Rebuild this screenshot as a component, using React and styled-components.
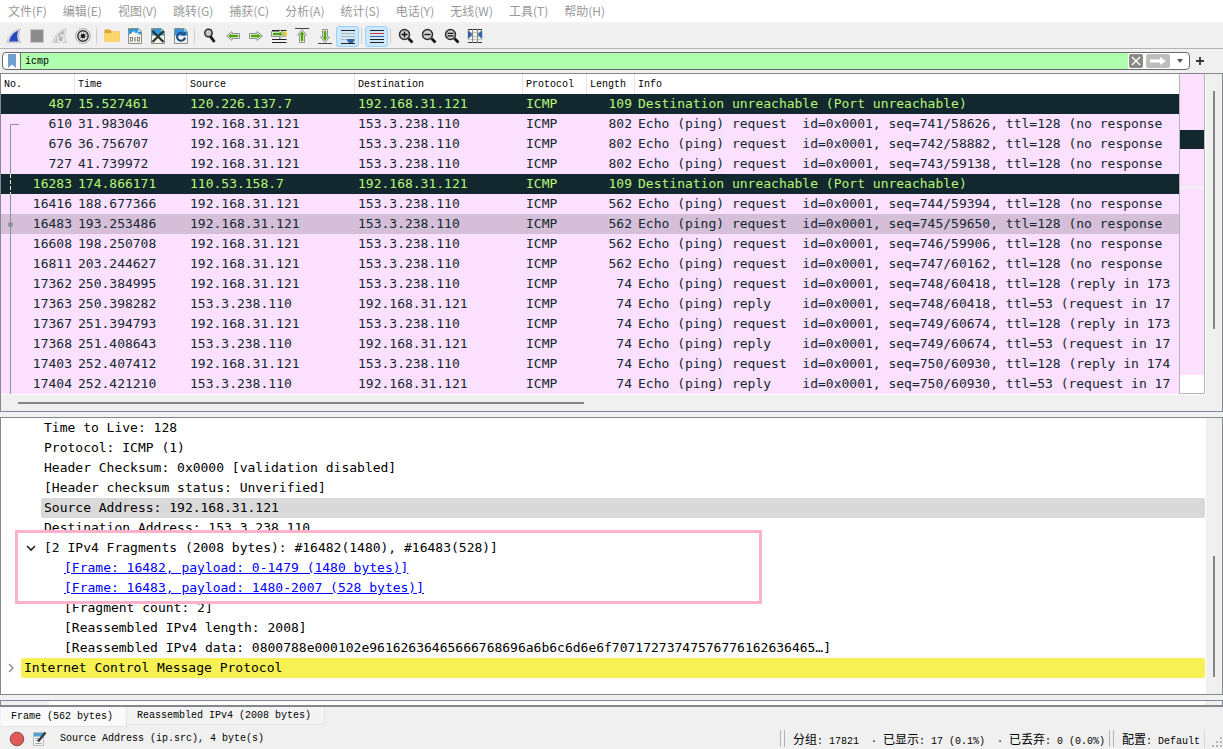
import React, { useState } from 'react';
import styled, { createGlobalStyle, css } from 'styled-components';

const GlobalStyle = createGlobalStyle`
    * {
        box-sizing: border-box;
    }

    body {
        margin: 0;
        background: #f0f0f0;
        color: #000000;
    }

    button {
        border: none;
        background: none;
        padding: 0;
        margin: 0;
        font: inherit;
        color: inherit;
    }
`;

const uiFont = css`
    font-family: 'Liberation Mono', 'Noto Sans CJK SC', monospace;
    font-size: 10px;
`;

const dataFont = css`
    font-family: 'DejaVu Sans Mono', 'Noto Sans CJK SC', monospace;
    font-size: 13px;
    line-height: 20px;
`;

const Window = styled.div`
    display: flex;
    flex-direction: column;
    min-height: 100vh;
    background: #f0f0f0;
    ${uiFont}
`;

const MenuBar = styled.nav`
    display: flex;
    height: 24px;
    background: #ffffff;
    border-bottom: 2px solid #f3f3f3;
    font-family: 'Noto Sans CJK SC', sans-serif;
    font-size: 12px;
    line-height: 22px;
    color: #999999;
`;

const MenuItem = styled.button`
    padding: 0 8px;
    white-space: nowrap;
`;

const ToolBar = styled.div`
    display: flex;
    align-items: center;
    height: 25px;
    padding: 0 2px;
    border-bottom: 1px solid #b4b4b4;
`;

const ToolButton = styled.button`
    display: flex;
    align-items: center;
    justify-content: center;
    width: 23px;
    height: 21px;
    border-radius: 3px;
    border: 1px solid ${({ $active }) => ($active ? '#99d1ff' : 'transparent')};
    background: ${({ $active }) => ($active ? '#cce8ff' : 'transparent')};

    svg {
        flex: none;
    }
`;

const ToolSeparator = styled.div`
    width: 1px;
    height: 16px;
    margin: 0 3px 0 2px;
    background: #cfcfcf;
`;

const FilterBar = styled.form`
    display: flex;
    align-items: center;
    height: 24px;
    padding: 0 2px;
`;

const FilterBox = styled.div`
    flex: 1;
    display: flex;
    align-items: center;
    height: 18px;
    border: 1px solid #6a6a6a;
    border-radius: 4px;
    background: #ffffff;
    overflow: hidden;
`;

const BookmarkButton = styled.button`
    display: flex;
    align-items: center;
    justify-content: center;
    width: 18px;
    height: 16px;
    border-right: 1px solid #6a6a6a;
`;

const FilterInput = styled.input`
    flex: 1;
    min-width: 0;
    height: 16px;
    border: none;
    outline: none;
    padding: 0 4px;
    background: #afffaf;
    ${uiFont}
`;

const FilterAction = styled.button`
    display: flex;
    align-items: center;
    justify-content: center;
    width: ${({ $wide }) => ($wide ? '24px' : '14px')};
    height: 14px;
    margin: 0 2px 0 1px;
    border-radius: 2px;
    background: ${({ $tone }) => $tone};
`;

const AddButton = styled.button`
    width: 31px;
    padding-right: 11px;
    display: flex;
    justify-content: center;
`;

const Panel = styled.section`
    display: flex;
    border: 1px solid #828790;
    background: #ffffff;
    overflow: hidden;
`;

const PacketArea = styled(Panel)`
    flex-direction: column;
    margin-bottom: 5px;
`;

const PacketBody = styled.div`
    display: flex;
    height: 321px;
    background: #ffffff;
`;

const TableClip = styled.div`
    flex: 1;
    min-width: 0;
    overflow: hidden;
`;

const PacketTable = styled.table`
    width: 100%;
    table-layout: fixed;
    border-collapse: separate;
    border-spacing: 0;
`;

const HeadCell = styled.th`
    height: 20px;
    padding: 0 0 0 3px;
    text-align: left;
    font-weight: 400;
    white-space: nowrap;
    border-right: ${({ $last }) => ($last ? 'none' : '1px solid #e5e5e5')};
`;

const rowColors = {
    error: css`
        background: #12272e;
        color: #b7f774;
    `,
    ping: css`
        background: #fce0ff;
        color: #12272e;
    `,
    selected: css`
        background: #d5bfd8;
        color: #12272e;
    `,
};

const PacketRow = styled.tr`
    ${({ $kind }) => rowColors[$kind]}
`;

const Cell = styled.td`
    height: 20px;
    padding: 0 3px;
    overflow: hidden;
    white-space: pre;
    text-align: ${({ $right }) => ($right ? 'right' : 'left')};
    ${dataFont}
`;

const NumberCell = styled(Cell)`
    padding-left: 0;
`;

const NumberContent = styled.div`
    display: flex;
    justify-content: space-between;
    height: 20px;
`;

const MiniMap = styled.div`
    display: flex;
    flex-direction: column;
    width: 26px;
    height: 320px;
    border: 1px solid #b4b4b4;
    border-top: none;
`;

const MapBand = styled.div`
    height: ${({ $height }) => $height}px;
    background: ${({ $color }) => $color};
`;

const VerticalTrack = styled.div`
    width: 16px;
    padding: ${({ $top }) => $top}px 0 0 7px;
    margin-left: 1px;
    background: #f0f0f0;
`;

const VerticalThumb = styled.div`
    width: 2px;
    height: ${({ $length }) => $length}px;
    background: #858585;
`;

const HorizontalTrack = styled.div`
    height: 16px;
    padding: 7px 0 0 17px;
    background: #f0f0f0;
`;

const HorizontalThumb = styled.div`
    width: 566px;
    height: 2px;
    background: #858585;
`;

const DetailArea = styled(Panel)`
    height: 278px;
    margin-bottom: 5px;
`;

const DetailTree = styled.div`
    flex: 1;
    min-width: 0;
    overflow: hidden;
    ${dataFont}
`;

const DetailLine = styled.div`
    display: flex;
    height: 20px;
    padding-left: ${({ $indent }) => $indent}px;
    white-space: pre;
`;

const DetailText = styled.div`
    flex: 1;
    padding-left: 3px;
    border-radius: 2px;
    background: ${({ $bg }) => $bg || 'transparent'};
`;

const FrameLink = styled.a`
    color: #0000ff;
    text-decoration: underline;
`;

const Expander = styled.button`
    display: flex;
    align-items: center;
    justify-content: center;
    width: 20px;
    height: 20px;
`;

const FragmentBox = styled.div`
    position: relative;
    width: 747px;
    max-width: 100%;
    margin: -8px 0 -6px 14px;
    padding: 5px 0 3px;
    border: 3px solid #ffb0ca;
    background: #ffffff;
`;

const BytesArea = styled(Panel)`
    height: 7px;
    border-bottom-width: 2px;
`;

const BytesGutter = styled.div`
    width: ${({ $width }) => $width}px;
    background: #f0f0f0;
`;

const BytesBody = styled.div`
    flex: 1;
`;

const TabBar = styled.div`
    display: flex;
    align-items: flex-start;
    height: 20px;
    padding-left: 1px;
`;

const Tab = styled.button`
    height: ${({ $active }) => ($active ? '20px' : '18px')};
    padding: 0 13px 0 10px;
    white-space: nowrap;
    background: ${({ $active }) => ($active ? '#fafafa' : '#f3f3f3')};
    border-right: 1px solid #e3e3e3;
    border-bottom: 1px solid #e3e3e3;
`;

const StatusBar = styled.footer`
    display: flex;
    align-items: center;
    height: 23px;
    padding-left: 8px;
    white-space: pre;
`;

const StatusButton = styled.button`
    display: flex;
    align-items: center;
    justify-content: center;
    width: 18px;
    height: 18px;
    margin-right: 4px;
`;

const StatusText = styled.span`
    flex: ${({ $grow }) => ($grow ? 1 : 'none')};
    padding: 0 4px 0 8px;
`;

const StatusGrip = styled.div`
    width: 5px;
    height: 17px;
    border: solid #b4b4b4;
    border-width: 0 1px;
`;

const Cjk = styled.span`
    font-family: 'Noto Sans CJK SC', sans-serif;
    font-size: 12px;
    line-height: 16px;
`;

const SizeGrip = styled.div`
    display: flex;
    align-items: flex-end;
    justify-content: flex-end;
    width: 19px;
    height: 18px;
    border-left: 1px solid #d9d9d9;
`;

/* ---------- icons ---------- */

const Icon = ({ children }) => (
    <svg width="16" height="16" viewBox="0 0 16 16" fill="none">
        {children}
    </svg>
);

const Fin = ({ fill, edge }) => (
    <path d="M1 14.5C2 8 7 2 14.5 1C12 5 12.3 10 14.8 14.5Z" fill={fill} stroke={edge} />
);

const StartIcon = () => (
    <Icon>
        <Fin fill="#e4e4e4" edge="#c4c4c4" />
        <path d="M3 13.5C4 8.5 7.5 4 12.5 2.5C10.8 6 11 10 12.5 13.5Z" fill="#2a48c0" />
    </Icon>
);

const StopIcon = () => (
    <Icon>
        <rect x="1.5" y="1.5" width="13" height="13" fill="#8c8c8c" stroke="#c8c8c8" />
    </Icon>
);

const RestartIcon = () => (
    <Icon>
        <Fin fill="#e9e9e9" edge="#cccccc" />
        <path d="M3 13.5C4 8.5 7.5 4 12.5 2.5C10.8 6 11 10 12.5 13.5Z" fill="#b4b4b4" />
        <path d="M7 8.5A3 3 0 1 0 11 9" stroke="#f2f2f2" strokeWidth="1.5" />
        <path d="M8.5 5.5V9.5L11.5 7.5Z" fill="#f2f2f2" />
    </Icon>
);

const OptionsIcon = () => (
    <Icon>
        <circle cx="8" cy="8" r="7.4" fill="#f4f4f4" stroke="#9a9a9a" strokeWidth="0.8" />
        <circle cx="8" cy="8" r="5.2" stroke="#2a2a2a" strokeWidth="1.4" />
        <circle cx="8" cy="8" r="3.2" stroke="#2a2a2a" strokeWidth="1" strokeDasharray="1.1 1.41" />
        <circle cx="8" cy="8" r="2.3" fill="#1c1c1c" />
    </Icon>
);

const FolderIcon = () => (
    <Icon>
        <path d="M0.5 1.5H6L7.5 3.5H15.5V13.5H0.5Z" fill="#e2a42c" />
        <path d="M0.5 5H7L8.5 3.5H15.5V14H0.5Z" fill="#ffd46c" />
    </Icon>
);

const Sheet = ({ children }) => (
    <Icon>
        <path d="M1.5 0.5H11.5L14.5 3.5V15.5H1.5Z" fill="#f4f4e6" stroke="#8b8f86" />
        <path d="M2 1H11.5L14 3.5V7.5H2Z" fill="#2f97dc" />
        <path d="M11 1L14 4H11Z" fill="#d9eefa" />
        {children}
    </Icon>
);

const SaveIcon = () => (
    <Sheet>
        <path d="M2 8.5V6.500C4.5 6.500 5 3.500 7.500 3C6.800 5 9 5.500 11 4.500C11 6 12 6.500 14 6.500V8.5Z" fill="#f4f4e6" />
        <rect x="3.5" y="9.5" width="2" height="3.5" stroke="#6a6a6a" strokeWidth="0.8" />
        <path d="M8 9V13.5" stroke="#6a6a6a" />
        <rect x="10.5" y="9.5" width="2" height="3.5" stroke="#6a6a6a" strokeWidth="0.8" />
    </Sheet>
);

const CloseFileIcon = () => (
    <Sheet>
        <path d="M2.5 3L13.5 14M13.5 3L2.5 14" stroke="#2b3033" strokeWidth="2.2" />
    </Sheet>
);

const ReloadIcon = () => (
    <Sheet>
        <path d="M9.5 5A4 4 0 1 0 12 9.5" stroke="#1f4c87" strokeWidth="2.2" />
        <path d="M7.5 7.5L12.5 7.5V2.5Z" fill="#1f4c87" />
    </Sheet>
);

const FindIcon = () => (
    <Icon>
        <circle cx="6.5" cy="5" r="3.7" fill="#c9c9c9" stroke="#2b2b2b" strokeWidth="1.5" />
        <path d="M8.5 8.5L12.5 14" stroke="#151515" strokeWidth="2.8" />
    </Icon>
);

const Arrow = () => (
    <>
        <path d="M1.5 8L7 3.5V5.5H14.5V10.5H7V12.5Z" fill="#ffffff" stroke="#8f8f8f" />
        <path d="M3.5 8L6 6V7H13V9H6V10Z" fill="#4ea40a" stroke="#4ea40a" strokeWidth="0.6" />
    </>
);

const BackIcon = () => (
    <Icon>
        <Arrow />
    </Icon>
);

const ForwardIcon = () => (
    <Icon>
        <g transform="rotate(180 8 8)">
            <Arrow />
        </g>
    </Icon>
);

const GoToIcon = () => (
    <Icon>
        <path d="M1 2.5H15.5M1 11.5H15.5M1 14.5H15.5" stroke="#222222" />
        <path d="M11 3.5H16V8.5H11Z" fill="#f6d83a" />
        <path d="M1 8.5H15.5" stroke="#b4b6b0" />
        <path d="M13.5 6L8.5 1.5V3.5H0.5V8.5H8.5V10.5Z" fill="#ffffff" stroke="#8f8f8f" />
        <path d="M11.5 6L9 4V5H2V7H9V8Z" fill="#4ea40a" stroke="#4ea40a" strokeWidth="0.6" />
    </Icon>
);

const FirstIcon = () => (
    <Icon>
        <path d="M1 0.5H15" stroke="#444444" />
        <path d="M8 1.5L12.5 7H10.5V14.5H5.5V7H3.5Z" fill="#ffffff" stroke="#8f8f8f" />
        <path d="M8 3.5L10.2 6.2H9V13H7V6.2H5.8Z" fill="#4ea40a" stroke="#4ea40a" strokeWidth="0.6" />
    </Icon>
);

const LastIcon = () => (
    <Icon>
        <path d="M1 15.5H15" stroke="#444444" />
        <path d="M8 14.5L12.5 9H10.5V1.5H5.5V9H3.5Z" fill="#ffffff" stroke="#8f8f8f" />
        <path d="M8 12.5L10.2 9.8H9V3H7V9.8H5.8Z" fill="#4ea40a" stroke="#4ea40a" strokeWidth="0.6" />
    </Icon>
);

const AutoScrollIcon = () => (
    <Icon>
        <path d="M1 2.5H15" stroke="#222222" />
        <path d="M1 5.5H15M1 8.5H15M1 11.5H8" stroke="#b4b6b0" />
        <path d="M1 15.5H15" stroke="#222222" />
        <path d="M7 11H14.5V12.5L12.5 15H9L7 12.5Z" fill="#3465a4" />
    </Icon>
);

const ColorizeIcon = () => (
    <Icon>
        <path d="M1 2.5H15" stroke="#222222" />
        <path d="M1 5.5H15" stroke="#d8322f" />
        <path d="M1 8.5H15" stroke="#3465a4" />
        <path d="M1 11.5H15M1 14.5H15" stroke="#222222" />
    </Icon>
);

const ZoomIcon = ({ sign }) => (
    <Icon>
        <circle cx="6.5" cy="6.5" r="5" fill="#cfcfcf" stroke="#2b2b2b" strokeWidth="1.4" />
        <path d="M10.5 10.5L14.5 14.5" stroke="#111111" strokeWidth="2.6" />
        <path d={sign} stroke="#111111" strokeWidth="1.3" />
    </Icon>
);

const ResizeIcon = () => (
    <Icon>
        <path d="M1 4.5H15M1 8.5H15M1 11.5H15" stroke="#c4c4bd" />
        <path d="M1 1.5H15M1 14.5H15" stroke="#333333" />
        <path d="M5.5 1V15M10.5 1V15" stroke="#85857f" />
        <path d="M1.5 3.5L4.5 6.5L1.5 9.5ZM14.5 3.5L11.5 6.5L14.5 9.5Z" fill="#3465a4" stroke="#3465a4" strokeWidth="1.4" />
    </Icon>
);

const toolGroups = [
    [
        ['开始', <StartIcon />],
        ['停止', <StopIcon />],
        ['重新开始', <RestartIcon />],
        ['选项', <OptionsIcon />],
    ],
    [
        ['打开', <FolderIcon />],
        ['保存', <SaveIcon />],
        ['关闭', <CloseFileIcon />],
        ['重新加载', <ReloadIcon />],
    ],
    [
        ['查找', <FindIcon />],
        ['上一分组', <BackIcon />],
        ['下一分组', <ForwardIcon />],
        ['转到分组', <GoToIcon />],
        ['首个分组', <FirstIcon />],
        ['最新分组', <LastIcon />],
        ['自动滚动', <AutoScrollIcon />, true],
    ],
    [['着色', <ColorizeIcon />, true]],
    [
        ['放大', <ZoomIcon sign="M3.5 6.5H9.5M6.5 3.5V9.5" />],
        ['缩小', <ZoomIcon sign="M3.5 6.5H9.5" />],
        ['正常大小', <ZoomIcon sign="M3.5 5.3H9.5M3.5 7.8H9.5" />],
        ['调整列宽', <ResizeIcon />],
    ],
];

const menus = [
    '文件(F)', '编辑(E)', '视图(V)', '跳转(G)', '捕获(C)', '分析(A)',
    '统计(S)', '电话(Y)', '无线(W)', '工具(T)', '帮助(H)',
];

const columns = [
    ['No.', 74],
    ['Time', 112],
    ['Source', 168],
    ['Destination', 168],
    ['Protocol', 64],
    ['Length', 48],
    ['Info', null],
];

const HOST = '192.168.31.121';
const PEER = '153.3.238.110';
const UNREACHABLE = 'Destination unreachable (Port unreachable)';

const request = (seq, tail) => `Echo (ping) request  id=0x0001, seq=${seq}, ttl=128 (${tail}`;
const reply = (seq, tail) => `Echo (ping) reply    id=0x0001, seq=${seq}, ttl=53 (${tail}`;

const packets = [
    [487, '15.527461', '120.226.137.7', HOST, 109, UNREACHABLE, 'error', null],
    [610, '31.983046', HOST, PEER, 802, request('741/58626', 'no response'), 'ping', 'start'],
    [676, '36.756707', HOST, PEER, 802, request('742/58882', 'no response'), 'ping', 'line'],
    [727, '41.739972', HOST, PEER, 802, request('743/59138', 'no response'), 'ping', 'line'],
    [16283, '174.866171', '110.53.158.7', HOST, 109, UNREACHABLE, 'error', 'dash'],
    [16416, '188.677366', HOST, PEER, 562, request('744/59394', 'no response'), 'ping', 'line'],
    [16483, '193.253486', HOST, PEER, 562, request('745/59650', 'no response'), 'selected', 'dot'],
    [16608, '198.250708', HOST, PEER, 562, request('746/59906', 'no response'), 'ping', 'line'],
    [16811, '203.244627', HOST, PEER, 562, request('747/60162', 'no response'), 'ping', 'line'],
    [17362, '250.384995', HOST, PEER, 74, request('748/60418', 'reply in 173'), 'ping', 'line'],
    [17363, '250.398282', PEER, HOST, 74, reply('748/60418', 'request in 17'), 'ping', 'line'],
    [17367, '251.394793', HOST, PEER, 74, request('749/60674', 'reply in 173'), 'ping', 'line'],
    [17368, '251.408643', PEER, HOST, 74, reply('749/60674', 'request in 17'), 'ping', 'line'],
    [17403, '252.407412', HOST, PEER, 74, request('750/60930', 'reply in 174'), 'ping', 'line'],
    [17404, '252.421210', PEER, HOST, 74, reply('750/60930', 'request in 17'), 'ping', 'line'],
];

const RelatedMark = ({ mark }) => (
    <svg width="20" height="20" viewBox="0 0 20 20" fill="none">
        {mark === 'start' && <path d="M18 10.5H9.5V20" stroke="#87939a" />}
        {(mark === 'line' || mark === 'dot') && <path d="M9.5 0V20" stroke="#87939a" />}
        {mark === 'dash' && <path d="M9.5 0V20" stroke="#d9f7b8" strokeDasharray="4 2" />}
        {mark === 'dot' && <circle cx="9.5" cy="10.5" r="2.5" fill="#87939a" />}
    </svg>
);

const PacketList = () => (
    <PacketTable>
        <colgroup>
            {columns.map(([name, width]) => (
                <col key={name} width={width || undefined} />
            ))}
        </colgroup>
        <thead>
            <tr>
                {columns.map(([name], i) => (
                    <HeadCell key={name} $last={i === columns.length - 1}>{name}</HeadCell>
                ))}
            </tr>
        </thead>
        <tbody>
            {packets.map(([no, time, source, destination, length, info, kind, mark]) => (
                <PacketRow key={no} $kind={kind}>
                    <NumberCell>
                        <NumberContent>
                            <RelatedMark mark={mark} />
                            <span>{no}</span>
                        </NumberContent>
                    </NumberCell>
                    <Cell>{time}</Cell>
                    <Cell>{source}</Cell>
                    <Cell>{destination}</Cell>
                    <Cell>ICMP</Cell>
                    <Cell $right>{length}</Cell>
                    <Cell>{info}</Cell>
                </PacketRow>
            ))}
        </tbody>
    </PacketTable>
);

const Details = () => (
    <DetailTree>
        <DetailLine $indent={40}><DetailText>Time to Live: 128</DetailText></DetailLine>
        <DetailLine $indent={40}><DetailText>Protocol: ICMP (1)</DetailText></DetailLine>
        <DetailLine $indent={40}><DetailText>Header Checksum: 0x0000 [validation disabled]</DetailText></DetailLine>
        <DetailLine $indent={40}><DetailText>[Header checksum status: Unverified]</DetailText></DetailLine>
        <DetailLine $indent={40}><DetailText $bg="#d9d9d9">Source Address: 192.168.31.121</DetailText></DetailLine>
        <DetailLine $indent={40}><DetailText>Destination Address: 153.3.238.110</DetailText></DetailLine>
        <FragmentBox>
            <DetailLine $indent={3}>
                <Expander aria-label="Collapse">
                    <svg width="10" height="10" viewBox="0 0 10 10" fill="none">
                        <path d="M1 3L5 7L9 3" stroke="#222222" strokeWidth="1.6" />
                    </svg>
                </Expander>
                <DetailText>[2 IPv4 Fragments (2008 bytes): #16482(1480), #16483(528)]</DetailText>
            </DetailLine>
            <DetailLine $indent={43}>
                <DetailText><FrameLink href="#16482">[Frame: 16482, payload: 0-1479 (1480 bytes)]</FrameLink></DetailText>
            </DetailLine>
            <DetailLine $indent={43}>
                <DetailText><FrameLink href="#16483">[Frame: 16483, payload: 1480-2007 (528 bytes)]</FrameLink></DetailText>
            </DetailLine>
        </FragmentBox>
        <DetailLine $indent={60}><DetailText>[Fragment count: 2]</DetailText></DetailLine>
        <DetailLine $indent={60}><DetailText>[Reassembled IPv4 length: 2008]</DetailText></DetailLine>
        <DetailLine $indent={60}>
            <DetailText>[Reassembled IPv4 data: 0800788e000102e96162636465666768696a6b6c6d6e6f70717273747576776162636465…]</DetailText>
        </DetailLine>
        <DetailLine $indent={0}>
            <Expander aria-label="Expand">
                <svg width="10" height="10" viewBox="0 0 10 10" fill="none">
                    <path d="M3 1L7 5L3 9" stroke="#8c8c8c" strokeWidth="1.4" />
                </svg>
            </Expander>
            <DetailText $bg="#f7f154">Internet Control Message Protocol</DetailText>
        </DetailLine>
    </DetailTree>
);

const App = () => {
    const [filter, setFilter] = useState('icmp');

    return (
        <Window>
            <GlobalStyle />
            <MenuBar>
                {menus.map((name) => (
                    <MenuItem key={name}>{name}</MenuItem>
                ))}
            </MenuBar>
            <ToolBar>
                {toolGroups.map((group, i) => (
                    <React.Fragment key={i}>
                        {i > 0 && <ToolSeparator />}
                        {group.map(([label, icon, active]) => (
                            <ToolButton key={label} aria-label={label} $active={active}>{icon}</ToolButton>
                        ))}
                    </React.Fragment>
                ))}
            </ToolBar>
            <FilterBar onSubmit={(e) => e.preventDefault()}>
                <FilterBox>
                    <BookmarkButton type="button" aria-label="Bookmarks">
                        <svg width="10" height="14" viewBox="0 0 10 14">
                            <path d="M1 0H9V14L5 10.5L1 14Z" fill="#729fcf" />
                        </svg>
                    </BookmarkButton>
                    <FilterInput
                        aria-label="Display filter"
                        value={filter}
                        onChange={(e) => setFilter(e.target.value)}
                    />
                    <FilterAction type="button" aria-label="Clear" $tone="#888a85" onClick={() => setFilter('')}>
                        <svg width="10" height="10" viewBox="0 0 10 10">
                            <path d="M1 1L9 9M9 1L1 9" stroke="#ffffff" strokeWidth="1.4" />
                        </svg>
                    </FilterAction>
                    <FilterAction type="submit" aria-label="Apply" $wide $tone="#bdbdbd">
                        <svg width="18" height="10" viewBox="0 0 18 10">
                            <path d="M1 3.5H11V1L17 5L11 9V6.5H1Z" fill="#ffffff" />
                        </svg>
                    </FilterAction>
                    <FilterAction type="button" aria-label="Recent filters" $tone="transparent">
                        <svg width="8" height="6" viewBox="0 0 8 6">
                            <path d="M1 1H7L4 5Z" fill="#555555" />
                        </svg>
                    </FilterAction>
                </FilterBox>
                <AddButton type="button" aria-label="Add filter button">
                    <svg width="10" height="10" viewBox="0 0 10 10">
                        <path d="M1 5H9M5 1V9" stroke="#333333" strokeWidth="1.8" />
                    </svg>
                </AddButton>
            </FilterBar>
            <PacketArea>
                <PacketBody>
                    <TableClip>
                        <PacketList />
                    </TableClip>
                    <MiniMap>
                        <MapBand $height={56} $color="#fce0ff" />
                        <MapBand $height={19} $color="#12272e" />
                        <MapBand $height={37} $color="#fce0ff" />
                        <MapBand $height={2} $color="#f0f0f0" />
                        <MapBand $height={187} $color="#fce0ff" />
                    </MiniMap>
                    <VerticalTrack $top={17}>
                        <VerticalThumb $length={238} />
                    </VerticalTrack>
                </PacketBody>
                <HorizontalTrack>
                    <HorizontalThumb />
                </HorizontalTrack>
            </PacketArea>
            <DetailArea>
                <Details />
                <VerticalTrack $top={138}>
                    <VerticalThumb $length={121} />
                </VerticalTrack>
            </DetailArea>
            <BytesArea>
                <BytesGutter $width={48} />
                <BytesBody />
                <BytesGutter $width={17} />
            </BytesArea>
            <TabBar>
                <Tab $active>Frame (562 bytes)</Tab>
                <Tab>Reassembled IPv4 (2008 bytes)</Tab>
            </TabBar>
            <StatusBar>
                <StatusButton aria-label="Expert information">
                    <svg width="16" height="16" viewBox="0 0 16 16">
                        <circle cx="8" cy="8" r="6.8" fill="#e05a5a" stroke="#8c4a4a" />
                    </svg>
                </StatusButton>
                <StatusButton aria-label="Capture comments">
                    <svg width="16" height="16" viewBox="0 0 16 16" fill="none">
                        <path d="M2.5 1.5H12.5V14.5H2.5Z" fill="#f4f6f6" stroke="#b8bcbc" />
                        <path d="M3 2H12V5.5H3Z" fill="#4aa3dc" />
                        <path d="M4.5 7.5H8M4.5 9.5H7M4.5 12.5H10.5" stroke="#a0a4a4" />
                        <path d="M7 10.5L14.5 1.5" stroke="#33393b" strokeWidth="2.4" />
                    </svg>
                </StatusButton>
                <StatusText $grow>Source Address (ip.src), 4 byte(s)</StatusText>
                <StatusGrip />
                <StatusText>
                    <Cjk>分组</Cjk>: 17821  · <Cjk>已显示</Cjk>: 17 (0.1%)  · <Cjk>已丢弃</Cjk>: 0 (0.0%)
                </StatusText>
                <StatusGrip />
                <StatusText><Cjk>配置</Cjk>: Default</StatusText>
                <SizeGrip>
                    <svg width="12" height="12" viewBox="0 0 12 12" fill="#b4b4b4">
                        <path d="M9 1h2v2h-2zM9 5h2v2h-2zM9 9h2v2h-2zM5 5h2v2h-2zM5 9h2v2h-2zM1 9h2v2h-2z" />
                    </svg>
                </SizeGrip>
            </StatusBar>
        </Window>
    );
};

export default App;
